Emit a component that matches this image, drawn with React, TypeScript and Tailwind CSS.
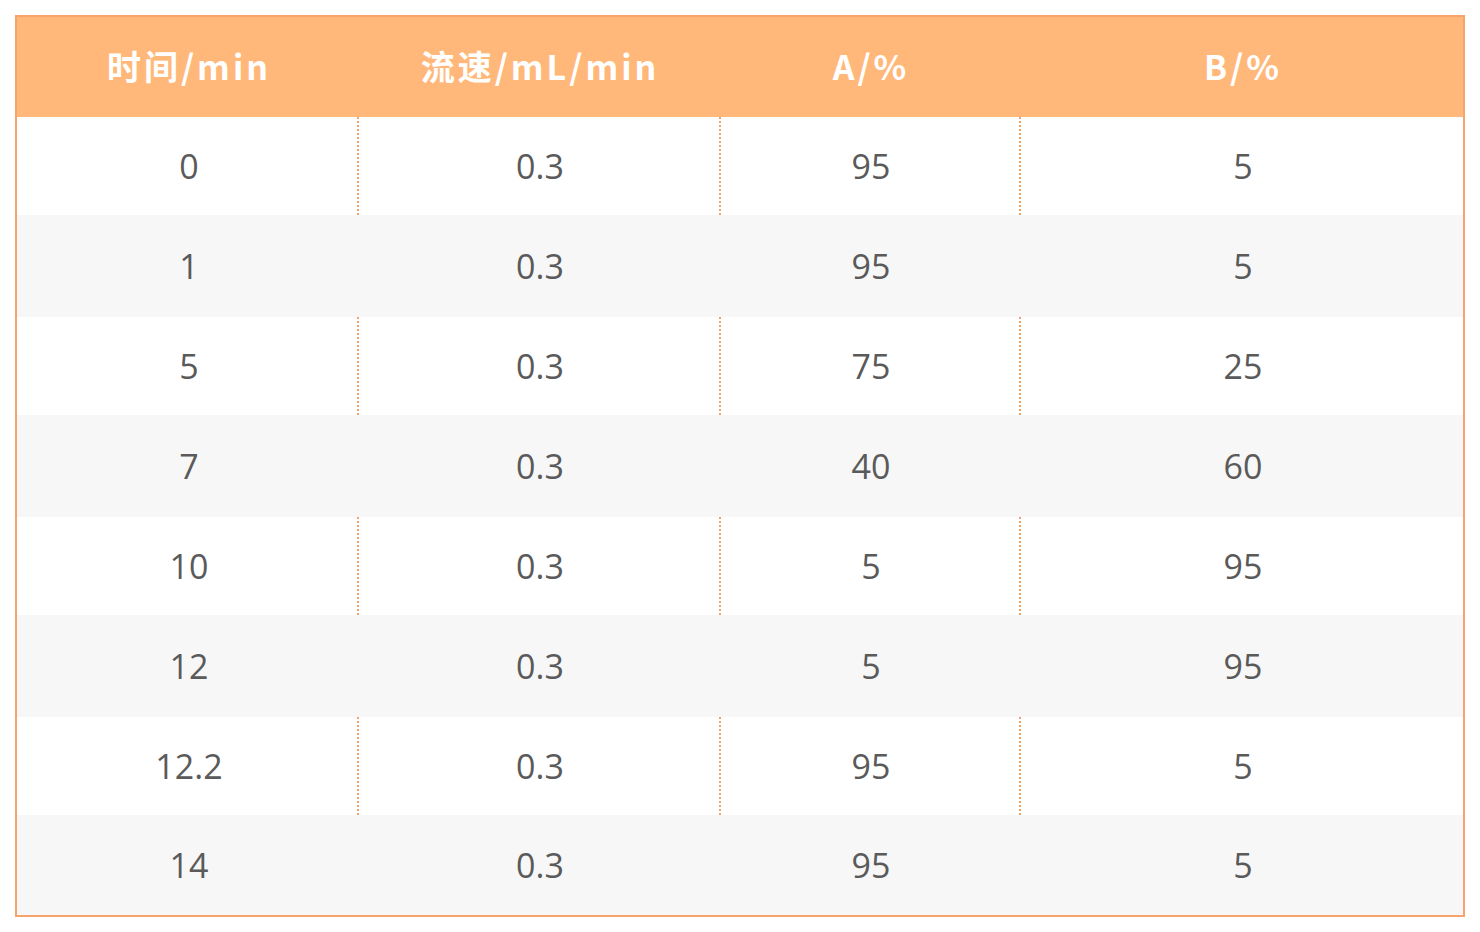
const headers = ["时间/min", "流速/mL/min", "A/%", "B/%"];

const rows = [
  ["0", "0.3", "95", "5"],
  ["1", "0.3", "95", "5"],
  ["5", "0.3", "75", "25"],
  ["7", "0.3", "40", "60"],
  ["10", "0.3", "5", "95"],
  ["12", "0.3", "5", "95"],
  ["12.2", "0.3", "95", "5"],
  ["14", "0.3", "95", "5"],
];

const cols = "grid grid-cols-[340px_362px_300px_444px]";

export default function App() {
  return (
    <div className="w-[1480px] h-[932px] bg-white p-[15px]">
      <div className="border-2 border-[#F6A46C]">
        {/* header */}
        <div className={`${cols} h-[100px] bg-[#FFB87A]`}>
          {headers.map((h, i) => (
            <div
              key={h}
              className={`flex items-center justify-center pb-[4px] text-white font-bold text-[34px] tracking-[3px] font-['Noto_Sans_CJK_SC',sans-serif] ${
                i === 0 ? "pl-[4px]" : "pl-[4px]"
              }`}
            >
              {h}
            </div>
          ))}
        </div>

        {/* body */}
        {rows.map((r, ri) => {
          const even = ri % 2 === 0;
          const last = ri === rows.length - 1;
          return (
            <div
              key={ri}
              className={`${cols} ${even ? "bg-white h-[98px]" : last ? "bg-[#F7F7F7] h-[100px]" : "bg-[#F7F7F7] h-[102px]"}`}
            >
              {r.map((v, ci) => (
                <div
                  key={ci}
                  className={`flex items-center justify-center text-[#5a5a5a] text-[34px] font-['Open_Sans',sans-serif] ${
                    ci > 0
                      ? even
                        ? "pl-[2px] border-l-2 border-dotted border-[#F4A26C]"
                        : "pl-[2px] border-l-2 border-transparent"
                      : "pl-[4px]"
                  }`}
                >
                  {v}
                </div>
              ))}
            </div>
          );
        })}
      </div>
    </div>
  );
}
